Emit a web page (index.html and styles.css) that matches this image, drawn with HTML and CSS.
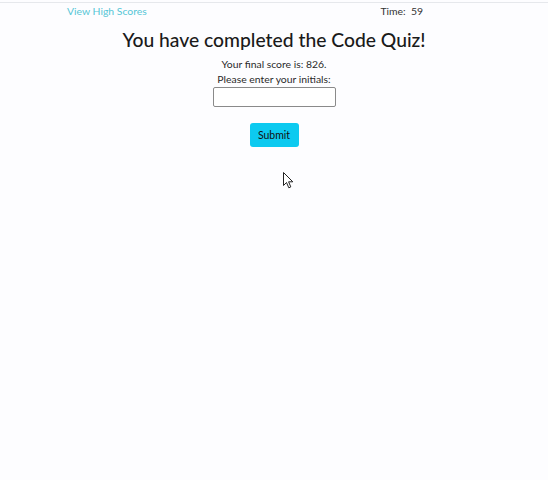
FILE: index.html
```html
<!DOCTYPE html>
<html>
<head>
<meta charset="utf-8">
<link rel="stylesheet" href="styles.css">
</head>
<body>
<div class="page">
  <header class="topbar">
    <a class="scores-link" href="#">View High Scores</a>
    <div class="timer">Time:&nbsp; 59</div>
  </header>
  <main class="done">
    <h1 class="title">You have completed the Code Quiz!</h1>
    <p class="line">Your final score is: 826.</p>
    <p class="line">Please enter your initials:</p>
    <input class="initials" type="text">
    <button class="submit">Submit</button>
  </main>
  <svg class="cursor" width="12" height="18" viewBox="0 0 12 18">
    <path d="M0.5 0.5 L0.5 13.5 L3.5 10.5 L5.8 15.8 L7.8 14.9 L5.6 9.8 L9.8 9.8 Z" fill="#fff" stroke="#222" stroke-width="1"/>
  </svg>
</div>
</body>
</html>
```
FILE: styles.css
```css
html, body {
  margin: 0;
  padding: 0;
  background: #fdfdff;
}
.page {
  position: relative;
  width: 548px;
  height: 480px;
  font-family: Lato, "Noto Sans", sans-serif;
  color: #212529;
}
.topbar {
  margin-top: 2px;
  border-top: 1px solid #e6e8ec;
  display: flex;
  justify-content: space-between;
  padding: 0 125px 0 67px;
  height: 16px;
  align-items: center;
  font-size: 10.4px;
}
.scores-link {
  color: #55c6d6;
  text-decoration: none;
}
.timer {
  color: #333;
}
.done {
  display: flex;
  flex-direction: column;
  align-items: center;
}
.title {
  margin: 9px 0 5px;
  font-size: 19.3px;
  font-weight: 500;
  line-height: 24px;
  color: #1a1a1a;
}
.line {
  margin: 0;
  font-size: 10.4px;
  line-height: 15px;
  color: #2a2a2a;
}
.initials {
  margin-top: 0;
  width: 123px;
  height: 20px;
  box-sizing: border-box;
  border: 1px solid #8a8a8a;
  border-radius: 2px;
  background: #fff;
}
.submit {
  margin-top: 16px;
  width: 49px;
  height: 24px;
  border: none;
  border-radius: 3px;
  background: #0dcaf0;
  color: #111;
  font-family: inherit;
  font-size: 10.5px;
  padding: 0;
}
.cursor {
  position: absolute;
  left: 283px;
  top: 170px;
}
```
